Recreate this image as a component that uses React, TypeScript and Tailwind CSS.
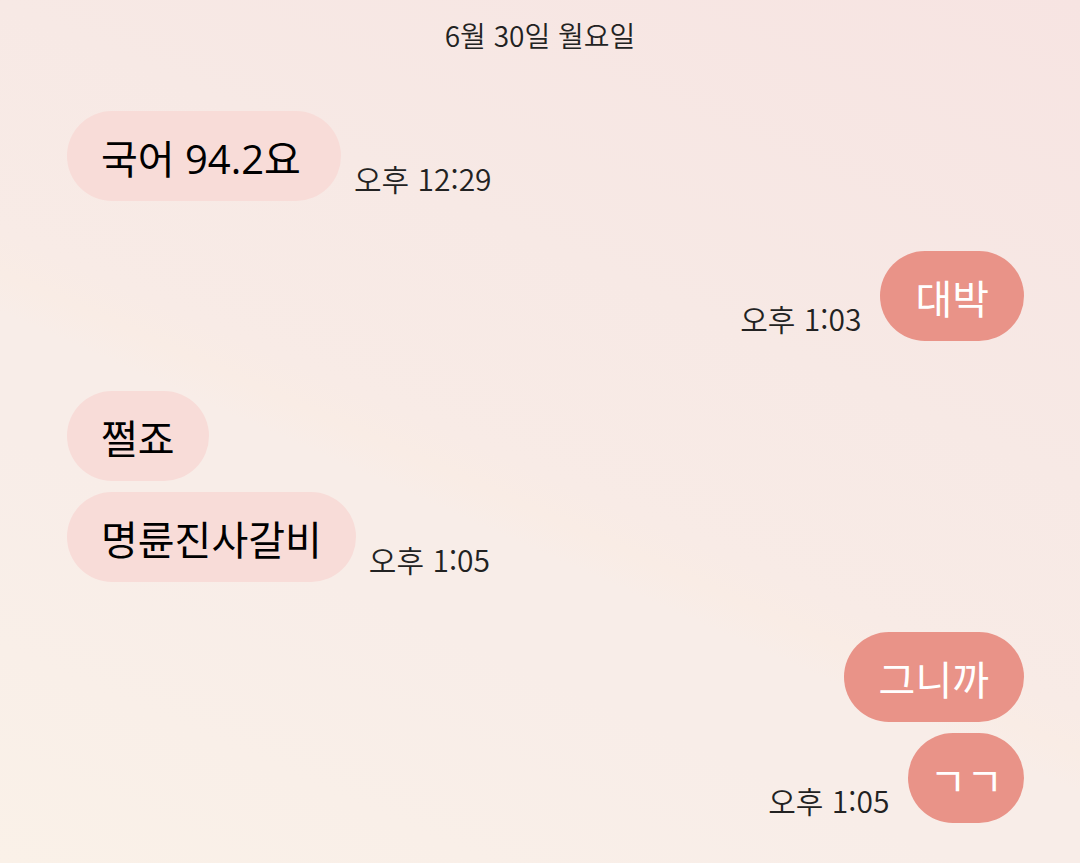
type Group = {
  id: number;
  mine: boolean;
  time: string;
  messages: { text: string; size: string }[];
};

const GROUPS: Group[] = [
  {
    id: 1,
    mine: false,
    time: '오후 12:29',
    messages: [{ text: '국어 94.2요', size: 'min-w-[274px] px-[34px]' }],
  },
  {
    id: 2,
    mine: true,
    time: '오후 1:03',
    messages: [{ text: '대박', size: 'px-[35px]' }],
  },
  {
    id: 3,
    mine: false,
    time: '오후 1:05',
    messages: [
      { text: '쩔죠', size: 'px-[34px]' },
      { text: '명륜진사갈비', size: 'px-[34px]' },
    ],
  },
  {
    id: 4,
    mine: true,
    time: '오후 1:05',
    messages: [
      { text: '그니까', size: 'px-[35px]' },
      { text: 'ㄱㄱ', size: 'px-[21px]' },
    ],
  },
];

function MessageGroup({ group }: { group: Group }) {
  const { mine, time, messages } = group;
  const last = messages.length - 1;

  return (
    <li
      className={`flex flex-col gap-[11px] ${mine ? 'items-end' : 'items-start'}`}
    >
      {messages.map((m, i) => (
        <div
          key={m.text}
          className={`flex items-end ${mine ? 'flex-row-reverse gap-[19px]' : 'gap-[13px]'}`}
        >
          <p
            className={`rounded-[45px] pt-[18px] pb-3 font-['Open_Sans','Noto_Sans_CJK_KR',sans-serif] text-[40px] leading-[60px] ${m.size} ${
              mine ? 'bg-[#e99388] text-white' : 'bg-[#f8dcd8] text-black'
            }`}
          >
            {m.text}
          </p>
          {i === last && (
            <time className="shrink-0 text-[30px] leading-[46px] font-[350] text-[#222]">
              {time}
            </time>
          )}
        </div>
      ))}
    </li>
  );
}

export default function App() {
  return (
    <main
      lang="ko"
      className="min-h-screen bg-[linear-gradient(204deg,#f7e4e2_0%,#f7e9e5_36%,#f8ebe6_53%,#f9ece5_56%,#f8ede8_59%,#f8ede8_68%,#faf1e8_100%)] pt-[15px] pb-10 font-['Noto_Sans_CJK_KR',sans-serif]"
    >
      <h1 className="mb-14 text-center text-[28px] leading-10 font-[350] text-[#222]">
        6월 30일 월요일
      </h1>
      <ol className="flex flex-col gap-[50px] pr-14 pl-[67px]">
        {GROUPS.map((g) => (
          <MessageGroup key={g.id} group={g} />
        ))}
      </ol>
    </main>
  );
}
